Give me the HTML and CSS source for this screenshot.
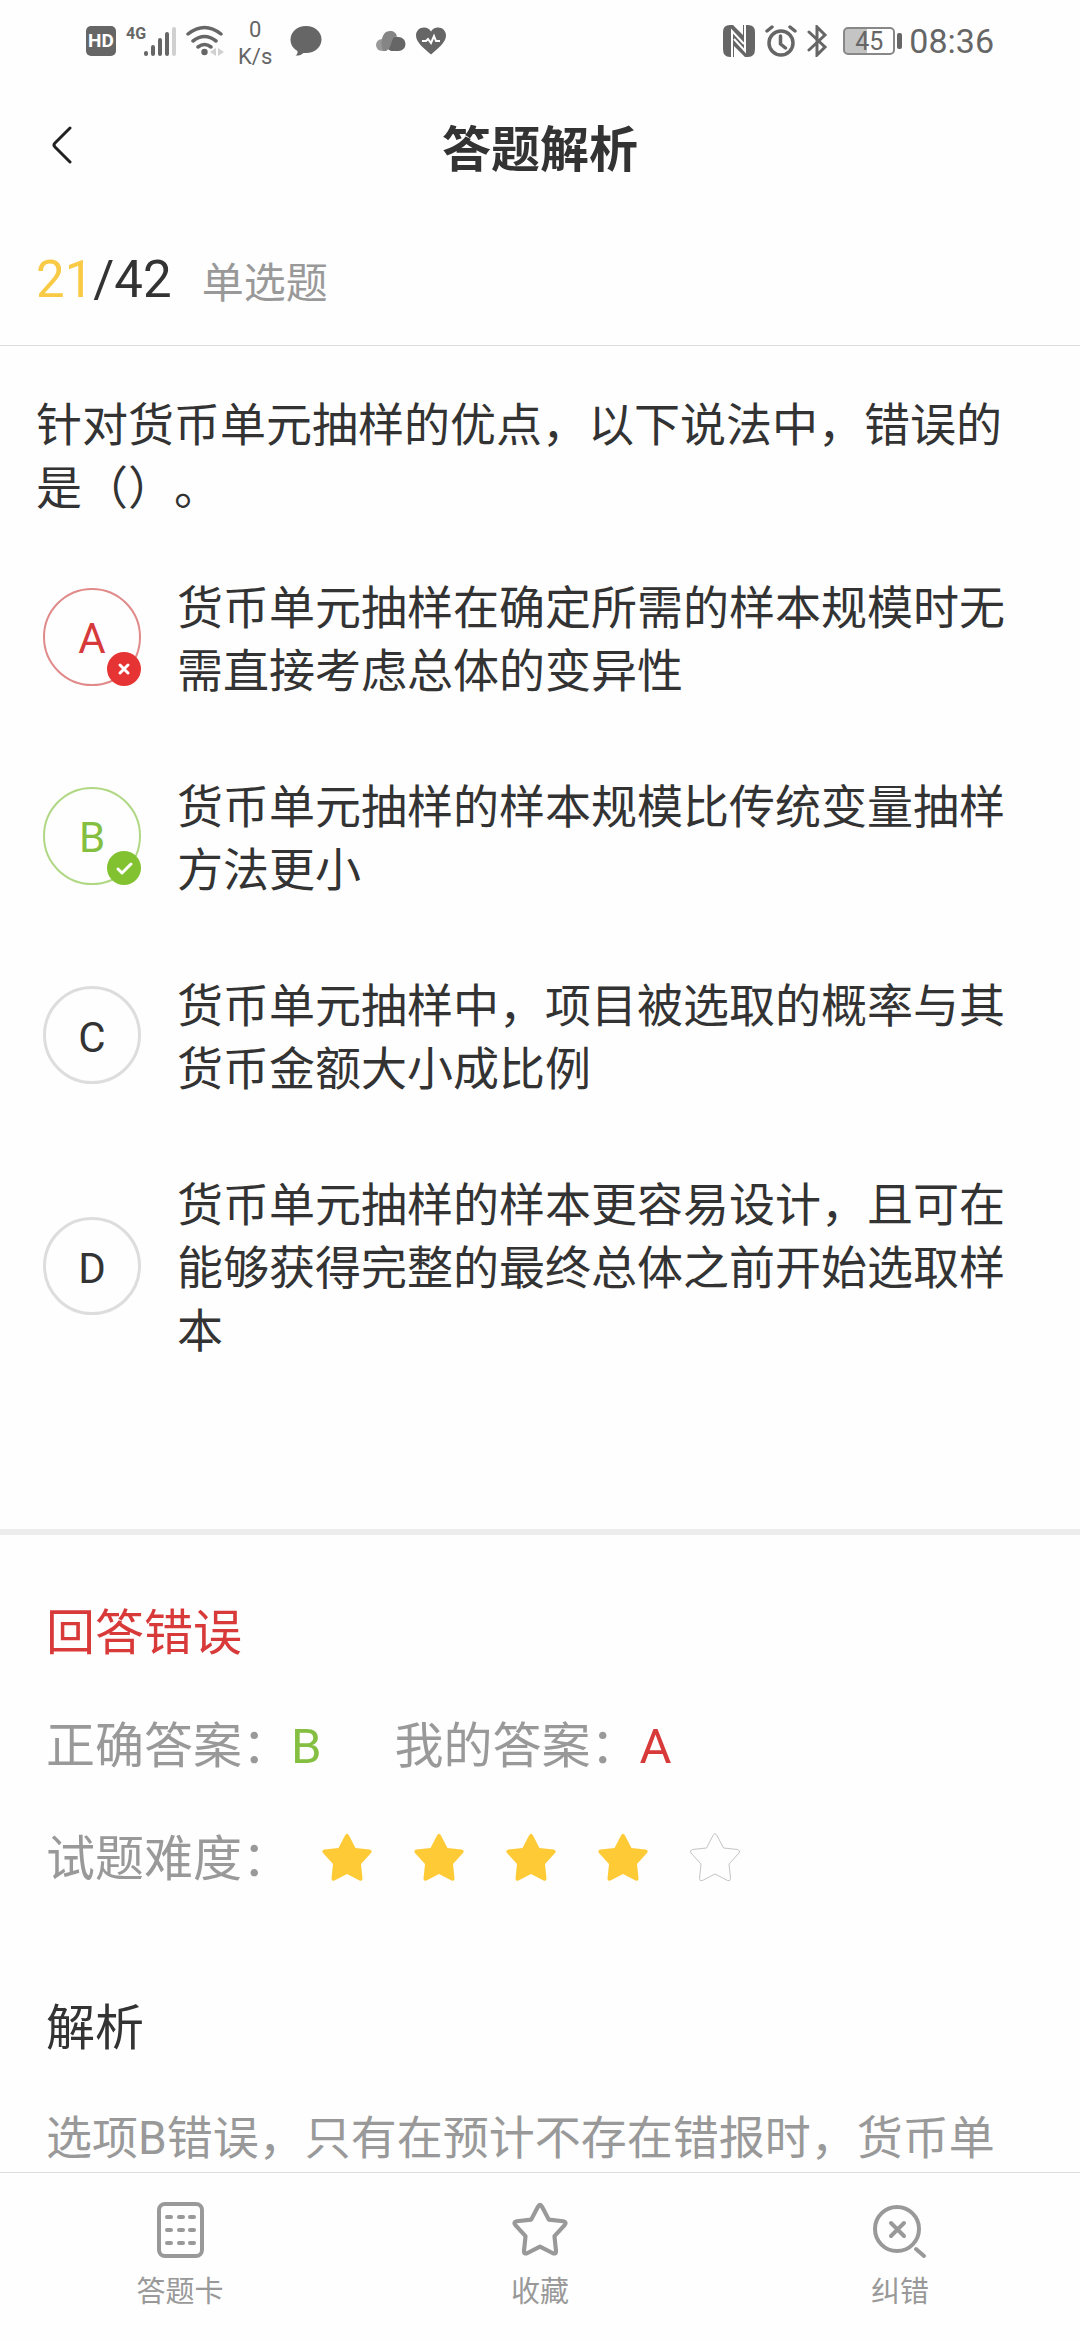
FILE: index.html
```html
<!DOCTYPE html>
<html lang="zh-CN">
<head>
    <meta charset="UTF-8">
    <meta name="viewport" content="width=device-width, initial-scale=1.0">
    <title>答题解析</title>
    <link rel="stylesheet" href="styles.css">
</head>
<body>
    <div class="status-bar">
        <div class="status-left">
            <span class="hd">HD</span>
            <svg class="signal" width="50" height="32" viewBox="0 0 50 32">
                <text x="0" y="14" class="signal-text">4G</text>
                <g stroke="#666" stroke-width="4" stroke-linecap="round">
                    <path d="M20 28v1M27 22v7M34 15v14M41 9v20"/>
                    <path d="M48 4v25" stroke="#d0d0d0"/>
                </g>
            </svg>
            <svg width="38" height="32" viewBox="0 0 38 32">
                <g fill="none" stroke="#666" stroke-width="3.500" stroke-linecap="round">
                    <path d="M2 9q16.500-13 33 0M7 16q11.500-9 23 0M12 22q6.500-5 13 0"/>
                </g>
                <circle cx="18.500" cy="27" r="3.200" fill="#666"/>
                <path d="M30 23v8l-6-4zM32 23v8l6-4z" fill="#d0d0d0"/>
            </svg>
            <span class="speed">0<br>K/s</span>
            <svg width="32" height="32" viewBox="0 0 32 32">
                <path d="M16 1C7 1 .500 7 .500 14.500c0 5 2.500 9 7 11.500.300 2-.500 3.500-2 4.500 3.500.300 6-.800 8-2.600l2.500.100c9 0 15.500-6 15.500-13.500S25 1 16 1z" fill="#666"/>
            </svg>
            <svg class="cloud" width="30" height="22" viewBox="0 0 30 22">
                <circle cx="6" cy="15" r="6" fill="#999"/>
                <path d="M15 21a7.500 7.500 0 0 1 0-14 9 9 0 0 1 7 0 7.500 7.500 0 0 1 0 14z" fill="#666"/>
                <circle cx="22.500" cy="14" r="7" fill="#666"/>
                <path d="M7 20C4 12 6 1 14 1c4 0 6 2 7 5-7 1-4 12-11 15H7z" fill="#858585"/>
            </svg>
            <svg width="30" height="28" viewBox="0 0 30 28">
                <path d="M15 27.500C9 22 0 16 0 8.500 0 4 3.500.500 8 .500c3 0 5.500 1.500 7 4 1.500-2.500 4-4 7-4 4.500 0 8 3.500 8 8C30 16 21 22 15 27.500z" fill="#666"/>
                <path d="M6 14h4l2-2 3 4 3-7 2 5h4" fill="none" stroke="#fff" stroke-width="2"/>
            </svg>
        </div>
        <div class="status-right">
            <svg width="32" height="32" viewBox="0 0 32 32">
                <path d="M7 0h3l10 10V0h5q7 0 7 7v17q0 8-7 8h-3L11 21v11H7q-7 0-7-8V7Q0 0 7 0z" fill="#666"/>
                <path d="M9 32V6l12 13M22 0v26L11 14" fill="none" stroke="#fff" stroke-width="2"/>
            </svg>
            <svg width="32" height="32" viewBox="0 0 32 32" fill="none" stroke="#666" stroke-width="3.500" stroke-linecap="round">
                <circle cx="16" cy="18" r="12"/>
                <path d="M15.500 11v8l5 4M2 6l5-4M25 2l5 4"/>
            </svg>
            <svg width="22" height="32" viewBox="0 0 22 32">
                <path d="M2 7l16 15-8 8V2l8 8L2 25" fill="none" stroke="#666" stroke-width="3" stroke-linecap="round"/>
            </svg>
            <span class="battery">45</span>
            <span class="clock">08:36</span>
        </div>
    </div>

    <header class="header">
        <button class="btn-back" type="button" aria-label="返回">
            <svg width="22" height="40" viewBox="0 0 22 40">
                <path d="M19 3L4 18q-2 2 0 4l15 15" fill="none" stroke="#222" stroke-width="3" stroke-linecap="round"/>
            </svg>
        </button>
        <h1>答题解析</h1>
    </header>

    <div class="progress">
        <span class="count"><span class="current">21</span>/42</span>
        <span class="type">单选题</span>
    </div>

    <main class="content">
        <form class="question">
            <p class="stem">针对货币单元抽样的优点，以下说法中，错误的是（）。</p>
            <label class="option wrong">
                <input type="radio" name="answer" value="A" checked>
                <span class="letter">A
                    <svg class="mark" width="34" height="34" viewBox="0 0 34 34">
                        <circle cx="17" cy="17" r="17" fill="#e63434"/>
                        <path d="M13 13l8 8M21 13l-8 8" stroke="#fff" stroke-width="3" stroke-linecap="round"/>
                    </svg>
                </span>
                <span class="text">货币单元抽样在确定所需的样本规模时无需直接考虑总体的变异性</span>
            </label>
            <label class="option right">
                <input type="radio" name="answer" value="B">
                <span class="letter">B
                    <svg class="mark" width="34" height="34" viewBox="0 0 34 34">
                        <circle cx="17" cy="17" r="17" fill="#82c230"/>
                        <path d="M11 18l4 4 9-9" fill="none" stroke="#fff" stroke-width="3" stroke-linecap="round" stroke-linejoin="round"/>
                    </svg>
                </span>
                <span class="text">货币单元抽样的样本规模比传统变量抽样方法更小</span>
            </label>
            <label class="option">
                <input type="radio" name="answer" value="C">
                <span class="letter">C</span>
                <span class="text">货币单元抽样中，项目被选取的概率与其货币金额大小成比例</span>
            </label>
            <label class="option">
                <input type="radio" name="answer" value="D">
                <span class="letter">D</span>
                <span class="text">货币单元抽样的样本更容易设计，且可在能够获得完整的最终总体之前开始选取样本</span>
            </label>
        </form>

        <section class="result">
            <p class="red">回答错误</p>
            <p class="answers">
                <span>正确答案：<b class="green">B</b></span>
                <span>我的答案：<b class="red">A</b></span>
            </p>
            <div class="level">
                <span>试题难度：</span>
                <div class="stars">
                    <svg class="star full"><use href="#star"/></svg>
                    <svg class="star full"><use href="#star"/></svg>
                    <svg class="star full"><use href="#star"/></svg>
                    <svg class="star full"><use href="#star"/></svg>
                    <svg class="star"><use href="#star"/></svg>
                </div>
            </div>
            <h2>解析</h2>
            <p class="explain">选项B错误，只有在预计不存在错报时，货币单</p>
        </section>
    </main>

    <nav class="tab-bar">
        <button type="button">
            <svg width="60" height="60" viewBox="0 0 60 60" fill="none" stroke="#999">
                <rect x="9" y="4" width="43" height="52" rx="6" stroke-width="4"/>
                <path d="M17 17h4M29 17h4M40 17h4M17 30h4M29 30h4M40 30h4M17 43h4M29 43h4M40 43h4" stroke-width="4" stroke-linecap="round"/>
            </svg>
            答题卡
        </button>
        <button type="button">
            <svg width="60" height="60" viewBox="-4 -4 58 58">
                <use href="#star" width="50" height="50" fill="none" stroke="#999" stroke-width="4"/>
            </svg>
            收藏
        </button>
        <button type="button">
            <svg width="60" height="60" viewBox="0 0 60 60" fill="none" stroke="#999" stroke-width="4" stroke-linecap="round">
                <circle cx="27" cy="29" r="22"/>
                <path d="M21 23l13 13M34 23L21 36M46 49l8 7"/>
            </svg>
            纠错
        </button>
    </nav>

    <!-- star shape used in the rating and the tab bar -->
    <svg class="defs" width="0" height="0">
        <symbol id="star" viewBox="0 0 50 50" overflow="visible">
            <path stroke-linejoin="round" d="M23 2.500q2-3.500 4 0l6.500 12.500 14 1.500q3.500 1 1.500 3.500L39 31l1.500 14.500q0 3-3 2L25 41l-12.500 6.500q-3 1-3-2L11 31 1 20q-2-2.500 1.500-3.500l14-1.500z"/>
        </symbol>
    </svg>
</body>
</html>
```
FILE: styles.css
```css
* {
    box-sizing: border-box;
}
body {
    display: flex;
    flex-direction: column;
    height: 100vh;
    margin: 0;
    background-color: #fefefe;
    color: #333;
    font-family: Roboto, "Noto Sans CJK SC", sans-serif;
    font-size: 46px;
    text-spacing-trim: space-all;
    overflow: hidden;
}
h1, h2, p {
    margin: 0;
    font-weight: 400;
}
button {
    padding: 0;
    border: none;
    background: none;
    font-family: inherit;
    cursor: pointer;
}
.status-bar {
    display: flex;
    justify-content: space-between;
    flex-shrink: 0;
    height: 82px;
    padding: 0 86px;
    color: #666;
}
.status-left, .status-right {
    display: flex;
    align-items: center;
    gap: 10px;
}
.hd {
    width: 30px;
    height: 30px;
    border-radius: 5px;
    background-color: #666;
    color: #fff;
    font-size: 19px;
    font-weight: 700;
    line-height: 30px;
    text-align: center;
}
.signal-text {
    fill: #666;
    font-size: 16px;
    font-weight: 700;
}
.speed {
    margin: 0 8px 0 4px;
    padding-top: 3px;
    font-size: 22px;
    line-height: 27px;
    text-align: center;
}
.cloud {
    margin-left: 44px;
}
.battery {
    position: relative;
    width: 52px;
    height: 28px;
    margin-left: 4px;
    border: 2px solid #888;
    border-radius: 5px;
    background: linear-gradient(to right, #c4c4c4 45%, transparent 45%);
    font-size: 25px;
    line-height: 25px;
    text-align: center;
}
.battery::after {
    content: "";
    position: absolute;
    top: 4px;
    right: -9px;
    width: 5px;
    height: 16px;
    border-radius: 2px;
    background-color: #666;
}
.clock {
    margin-left: 4px;
    font-size: 34px;
}
.header {
    display: grid;
    grid-template-columns: 100px 1fr 100px;
    align-items: center;
    flex-shrink: 0;
    height: 132px;
    padding-bottom: 6px;
}
.header h1 {
    font-size: 49px;
    font-weight: 700;
    text-align: center;
}
.btn-back {
    padding-left: 24px;
    line-height: 0;
}
.progress {
    display: flex;
    align-items: center;
    gap: 30px;
    flex-shrink: 0;
    height: 132px;
    padding: 0 36px;
    border-bottom: 1px solid #ddd;
}
.count {
    font-size: 51px;
}
.current {
    color: #f8ca46;
}
.type {
    color: #999;
    font-size: 42px;
}
.content {
    flex: 1;
    min-height: 0;
    overflow: hidden;
}
.question {
    padding: 48px 72px 166px 36px;
    border-bottom: 6px solid #ededed;
    line-height: 63px;
}
.stem {
    margin-bottom: 57px;
}
.option {
    display: flex;
    align-items: center;
    gap: 36px;
    margin-bottom: 73px;
    padding-left: 7px;
}
.option:last-child {
    margin-bottom: 0;
}
.option input {
    position: absolute;
    opacity: 0;
}
.letter {
    position: relative;
    flex-shrink: 0;
    width: 98px;
    height: 98px;
    margin-bottom: 6px;
    border: 3px solid #ddd;
    border-radius: 50%;
    font-size: 42px;
    line-height: 98px;
    text-align: center;
}
.mark {
    position: absolute;
    right: -2px;
    bottom: -2px;
}
.wrong .letter {
    border: 2px solid #e08a8a;
    color: #d63a3a;
}
.right .letter {
    border: 2px solid #b0d884;
    color: #84bf41;
}
.result {
    padding: 64px 46px 0;
    color: #999;
    font-size: 49px;
    line-height: 70px;
}
.result b {
    font-weight: 400;
}
.red, .result .red {
    color: #d83a3a;
}
.green {
    color: #84bf41;
}
.answers {
    display: flex;
    gap: 73px;
    margin: 43px 0;
}
.level {
    display: flex;
    align-items: center;
    gap: 31px;
}
.stars {
    display: flex;
    gap: 42px;
    padding-bottom: 4px;
}
.star {
    width: 50px;
    height: 50px;
    overflow: visible;
    fill: none;
    stroke: #c4c4c4;
}
.star.full {
    fill: #fecb36;
    stroke: none;
}
.result h2 {
    margin: 99px 0 39px;
    color: #333;
    font-size: 49px;
}
.explain {
    font-size: 46px;
}
.tab-bar {
    display: flex;
    flex-shrink: 0;
    height: 168px;
    border-top: 1px solid #ddd;
    background-color: #fefefe;
}
.tab-bar button {
    display: flex;
    flex: 1;
    flex-direction: column;
    align-items: center;
    gap: 12px;
    padding-top: 27px;
    color: #999;
    font-size: 29px;
    line-height: 40px;
}
.defs {
    position: absolute;
}
```
